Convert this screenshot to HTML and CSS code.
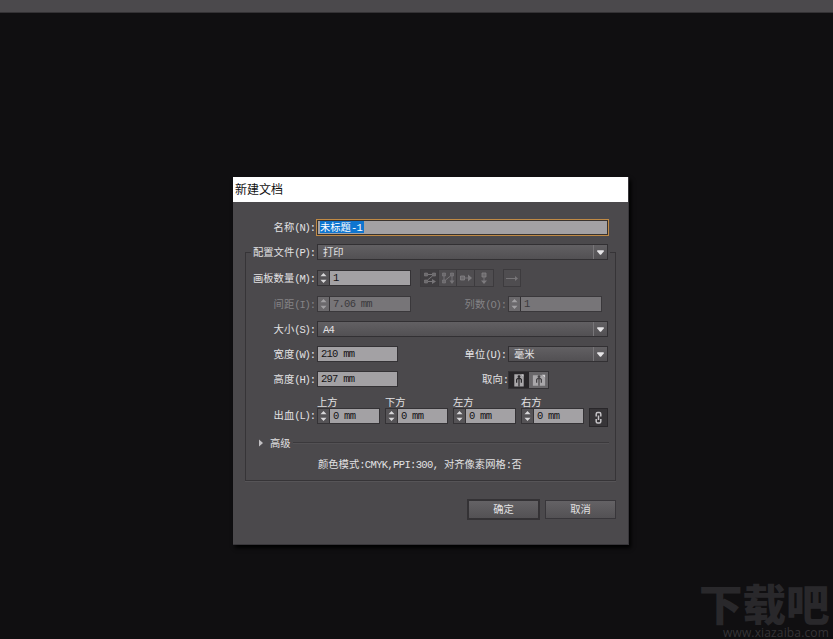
FILE: index.html
```html
<!DOCTYPE html>
<html lang="zh-CN">
<head>
<meta charset="utf-8">
<title>新建文档</title>
<link rel="stylesheet" href="styles.css">
</head>
<body>
<svg width="0" height="0" class="defs">
  <symbol id="step" viewBox="0 0 11 14"><path d="M5.500 2 8.500 5.200H2.500zM2.500 8.800h6L5.500 12z" fill="currentColor"/></symbol>
  <symbol id="down" viewBox="0 0 14 14"><path d="M3.500 5h7v1.500L7.500 10h-1L3.500 6.500z" fill="#e6e5e7"/></symbol>
</svg>
<div class="topbar"></div>
<main class="canvas">
  <div class="dialog">
    <div class="title">新建文档</div>
    <div class="row name">
      <div class="label">名称<i>(N):</i></div>
      <div class="focus"><span class="sel">未标题<i>-1</i></span></div>
    </div>
    <section class="frame">
      <div class="row profile">
        <div class="label">配置文件<i>(P):</i></div>
        <div class="select wide"><span>打印</span><svg><use href="#down"/></svg></div>
      </div>
      <div class="row boards">
        <div class="label">画板数量<i>(M):</i></div>
        <div class="spin"><svg><use href="#step"/></svg><b><i>1</i></b></div>
        <div class="tools">
          <div class="tool on"><svg viewBox="0 0 18 16"><path d="M3.500 3h3v3h-3zM11.500 3h3v3h-3zM3.500 10h3v3h-3z" fill="#6c6a6d" stroke="#807e81" stroke-width=".6"/><path d="M7 4.500h4M11.500 6l-5 4M7 11.500h5" stroke="#777578" fill="none"/><path d="M11 9 15 11.500 11 14z" fill="#777578"/></svg></div>
          <div class="tool"><svg viewBox="0 0 18 16"><path d="M3.500 3h3v3h-3zM11.500 3h3v3h-3zM3.500 10h3v3h-3z" fill="#6c6a6d" stroke="#807e81" stroke-width=".6"/><path d="M5 6v4M6.500 10l5-4M13 6v5" stroke="#777578" fill="none"/><path d="M10.500 10.500h5L13 14z" fill="#777578"/></svg></div>
          <div class="tool"><svg viewBox="0 0 18 16"><path d="M3.500 6h4v4h-4z" fill="#6c6a6d" stroke="#858386" stroke-width=".8"/><path d="M11 4.500 15 8 11 11.500z" fill="#7d7b7e"/><path d="M7.500 8h4" stroke="#777578"/></svg></div>
          <div class="tool"><svg viewBox="0 0 18 16"><path d="M7 3h4v4H7z" fill="#6c6a6d" stroke="#858386" stroke-width=".8"/><path d="M6 10.500h6L9 14z" fill="#7d7b7e"/><path d="M9 7v4" stroke="#777578"/></svg></div>
        </div>
        <div class="tool single"><svg viewBox="0 0 16 16"><path d="M2 8.500h10" stroke="#777578"/><path d="M11 6 14 8.500 11 11z" fill="#777578"/></svg></div>
      </div>
      <div class="row spacing off">
        <div class="label">间距<i>(I):</i></div>
        <div class="spin"><svg><use href="#step"/></svg><b><i>7.06 mm</i></b></div>
        <div class="label second">列数<i>(O):</i></div>
        <div class="spin"><svg><use href="#step"/></svg><b><i>1</i></b></div>
      </div>
      <div class="row size">
        <div class="label">大小<i>(S):</i></div>
        <div class="select wide"><span><i>A4</i></span><svg><use href="#down"/></svg></div>
      </div>
      <div class="row width">
        <div class="label">宽度<i>(W):</i></div>
        <div class="field"><i>210 mm</i></div>
        <div class="label second">单位<i>(U):</i></div>
        <div class="select"><span>毫米</span><svg><use href="#down"/></svg></div>
      </div>
      <div class="row height">
        <div class="label">高度<i>(H):</i></div>
        <div class="field"><i>297 mm</i></div>
        <div class="label second tight">取向<i>:</i></div>
        <div class="orient">
          <div class="pressed"><svg viewBox="0 0 20 17"><path d="M5 2.500h7l3 3v10H5z" fill="#aaa8ab"/><path d="M12 2.500h3v3z" fill="#d8d7d9"/><circle cx="10" cy="5" r="1.500" fill="#29272a"/><path d="M7.500 11.500V8l1-1h3l1 1v3.500M10 7v8.500" stroke="#29272a" stroke-width="1.300" fill="none"/></svg></div>
          <div><svg viewBox="0 0 20 17"><path d="M3.500 3.500h10l3 3v8h-13z" fill="#a9a7aa"/><path d="M13 3h3.500v3.500z" fill="#d0ced1"/><circle cx="10" cy="5" r="1.500" fill="#454346"/><path d="M7.500 11.500V8l1-1h3l1 1v3.500M10 7v7.500" stroke="#454346" stroke-width="1.300" fill="none"/></svg></div>
        </div>
      </div>
      <div class="row bleed">
        <div class="label">出血<i>(L):</i></div>
        <div class="side"><em>上方</em><div class="spin small"><svg><use href="#step"/></svg><b><i>0 mm</i></b></div></div>
        <div class="side"><em>下方</em><div class="spin small"><svg><use href="#step"/></svg><b><i>0 mm</i></b></div></div>
        <div class="side"><em>左方</em><div class="spin small"><svg><use href="#step"/></svg><b><i>0 mm</i></b></div></div>
        <div class="side"><em>右方</em><div class="spin small"><svg><use href="#step"/></svg><b><i>0 mm</i></b></div></div>
        <div class="chain"><svg viewBox="0 0 17 17"><path d="M6.200 7.500V5q0-1.500 1.500-1.500h1.600q1.500 0 1.500 1.500v2.500M6.200 10v2.500q0 1.500 1.500 1.500h1.600q1.500 0 1.500-1.500V10M8.500 6.500v4.500" stroke="#c5c3c6" stroke-width="1.500" fill="none"/></svg></div>
      </div>
      <div class="advanced">
        <svg viewBox="0 0 6 8"><path d="M1 .5 5 4 1 7.500z" fill="#c2c0c3"/></svg>
        <span>高级</span><hr>
      </div>
      <div class="summary">颜色模式<i>:CMYK,PPI:300, </i>对齐像素网格<i>:</i>否</div>
    </section>
    <div class="actions">
      <div class="button primary">确定</div>
      <div class="button">取消</div>
    </div>
  </div>
  <div class="watermark"><div class="brand">下载吧</div><div class="url">www.xiazaiba.com</div></div>
</main>
</body>
</html>
```
FILE: styles.css
```css
* { box-sizing: border-box; }
body {
  margin: 0;
  width: 833px;
  height: 639px;
  overflow: hidden;
  background: #100f11;
  color: #e2e1e3;
  font: 10.3px/14px "Noto Sans CJK SC", sans-serif;
}
.defs { position: absolute; }
i {
  font-family: "Liberation Mono", monospace;
  font-size: 10.5px;
  font-style: normal;
  letter-spacing: -.75px;
  white-space: pre;
}
svg { display: block; flex: none; }
.topbar { height: 13px; background: #4b494c; border-bottom: 1px solid #343235; }
.canvas { position: relative; height: 626px; padding: 164px 0 0 233px; }
.dialog {
  width: 396px;
  height: 368px;
  background: #4b494c;
  border-right: 1px solid #38363a;
  border-bottom: 1px solid #38363a;
  box-shadow: 2px 3px 4px #000;
}
.title {
  height: 25px;
  padding-left: 2px;
  background: #fff;
  color: #111;
  font-size: 12px;
  line-height: 24px;
}
.row { display: flex; height: 16px; align-items: center; }
.label { width: 70px; margin-right: 2px; text-align: right; white-space: nowrap; flex: none; }
.label i { letter-spacing: -1.1px; }
.name { margin-top: 17px; height: 17px; }
.name .label { width: 82px; margin-right: 1px; }
.focus {
  width: 293px;
  height: 17px;
  padding: 1px 0 0 3px;
  background: #a3a1a4;
  border: 1px solid #c08a45;
  box-shadow: inset 0 0 0 1px #39332f;
}
.sel { display: block; width: 44px; height: 12px; line-height: 11px; background: #0f75cf; color: #fff; white-space: nowrap; }
.frame { position: relative; margin: 8px 0 0 12px; width: 371px; height: 237px; }
.frame::before {
  content: "";
  position: absolute;
  inset: 8px 0 0;
  border: 1px solid #363437;
  border-top: 0;
  box-shadow: 0 1px #565457;
  background:
    linear-gradient(#363437, #363437) 0 0 / 5px 1px no-repeat,
    linear-gradient(#363437, #363437) 100% 0 / 5px 1px no-repeat;
}
.frame > * { position: relative; }
.select {
  display: flex;
  width: 100px;
  height: 16px;
  border: 1px solid #323033;
  background: linear-gradient(#626063, #525053);
}
.select.wide { width: 291px; }
.select span { flex: 1; padding-left: 5px; line-height: 13px; }
.select svg { width: 14px; height: 14px; border-left: 1px solid #777578; }
.spin { display: flex; width: 94px; height: 16px; border: 1px solid #343235; background: #a3a1a4; color: #141315; }
.spin svg { width: 12px; height: 14px; background: #555356; color: #d8d7d9; border-right: 1px solid #343235; }
.spin b { padding-left: 3px; font-weight: 400; line-height: 11px; }
.spin.small { width: 63px; }
.field { width: 81px; height: 16px; padding-left: 3px; border: 1px solid #343235; background: #a3a1a4; color: #141315; line-height: 11px; }
.boards { margin-top: 10px; }
.tools { display: flex; width: 74px; height: 18px; margin-left: 9px; border: 1px solid #3d3b3e; }
.tool { width: 18px; height: 16px; border-right: 1px solid #3d3b3e; background: #4f4d50; }
.tool:last-child { border-right: 0; }
.tool.on { background: #403e41; }
.tool svg { width: 18px; height: 16px; }
.tool.single, .tool.single:last-child { width: 18px; height: 18px; margin-left: 9px; border: 1px solid #3d3b3e; }
.tool.single svg { width: 16px; }
.spacing { margin-top: 10px; }
.off .label { color: #858386; }
.off .spin { background: #777578; color: #3b393c; border-color: #3a383b; }
.off .spin svg { background: #6b696c; color: #a19fa2; }
.size { margin-top: 9px; }
.width { margin-top: 9px; }
.height { margin-top: 9px; }
.label.second { width: 95px; }
.field + .label.second { width: 108px; }
.label.tight i { letter-spacing: -3px; }
.orient { display: flex; width: 41px; height: 18px; margin-top: 2px; border: 1px solid #343235; background: #69676a; }
.orient .pressed { background: #29272a; }
.orient svg { width: 20px; height: 16px; }
.bleed { margin-top: 9px; height: 31px; align-items: flex-start; }
.bleed > .label { padding-top: 12px; }
.side { width: 63px; margin-right: 5px; }
.side em { display: block; height: 12px; line-height: 12px; font-style: normal; }
.chain { width: 19px; height: 19px; margin-top: 12px; border: 1px solid #29272a; background: #373538; }
.chain svg { width: 17px; height: 17px; }
.advanced { display: flex; align-items: center; height: 14px; margin-top: 9px; padding-left: 13px; }
.advanced svg { width: 6px; height: 8px; }
.advanced span { margin-left: 6px; }
.advanced hr { flex: none; width: 316px; height: 2px; margin: 0 0 0 2px; border: 0; border-top: 1px solid #3b393c; border-bottom: 1px solid #535154; }
.summary { margin: 7px 0 0 73px; white-space: nowrap; }
.summary i { letter-spacing: -.65px; }
.actions { display: flex; align-items: center; height: 21px; margin: 18px 0 0 234px; gap: 5px; }
.button {
  width: 71px;
  height: 19px;
  border: 1px solid #38363a;
  background: linear-gradient(#646265, #535154);
  text-align: center;
  line-height: 16px;
}
.button.primary { width: 73px; height: 21px; border: 2px solid #343235; }
.watermark { position: absolute; left: 699px; top: 568px; width: 134px; color: #29282b; }
.brand { font-size: 43.5px; font-weight: 900; line-height: 44px; white-space: nowrap; }
.url { margin: 2px 0 0 24px; font: 12px/12px "Open Sans", sans-serif; color: #353336; letter-spacing: .15px; }
```
